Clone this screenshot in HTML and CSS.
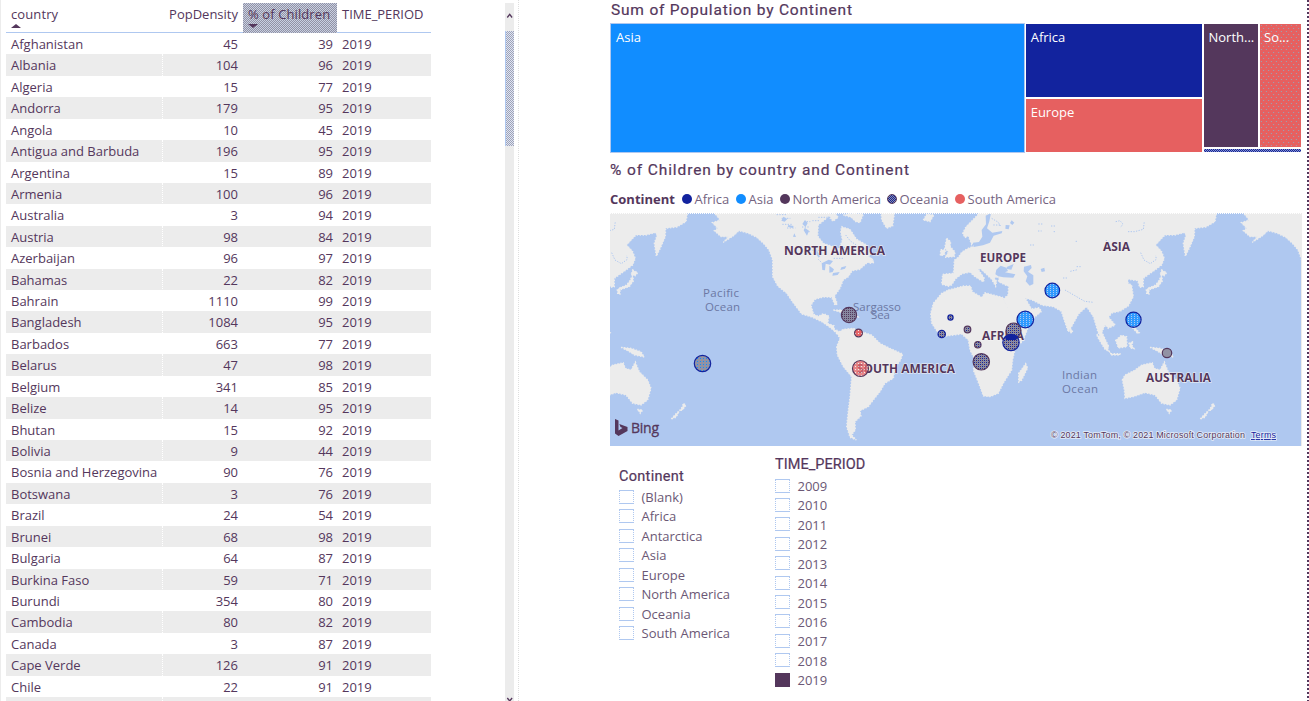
FILE: index.html
```
<!DOCTYPE html>
<html lang="en">
<head>
<meta charset="utf-8">
<title>Population report</title>
<link rel="stylesheet" href="styles.css">
</head>
<body>
<main class="report">
  <section class="table-visual">
    <div class="row head">
      <span class="country">country<i class="sort up"></i></span>
      <span class="num">PopDensity</span>
      <span class="num selected">% of Children<i class="sort down"></i></span>
      <span class="time">TIME_PERIOD</span>
    </div>
    <div class="rows" id="rows"></div>
  </section>
  <div class="scrollbar">
    <svg class="arrow" viewBox="0 0 9 22"><path d="M2.3 14.500 4.700 11.300 7.100 14.500" fill="none" stroke="#54375c" stroke-width="1.3"/></svg>
    <div class="thumb"></div>
    <svg class="arrow end" viewBox="0 0 9 5"><path d="M2.3 2 4.7 5 7.1 2" fill="none" stroke="#54375c" stroke-width="1.3"/></svg>
  </div>
  <div class="divider"></div>
  <section class="visuals">
    <h2 class="tree-title">Sum of Population by Continent</h2>
    <div class="treemap">
      <div class="tile asia">Asia</div>
      <div class="stack">
        <div class="tile africa">Africa</div>
        <div class="tile europe">Europe</div>
      </div>
      <div class="small">
        <div class="pair"><div class="tile north">North...</div><div class="tile south">So...</div></div>
        <div class="tile oceania"></div>
      </div>
    </div>
    <h2 class="map-title">% of Children by country and Continent</h2>
    <div class="legend">
      <b>Continent</b>
      <span class="l1"><i class="dot navy"></i>Africa</span>
      <span class="l2"><i class="dot blue"></i>Asia</span>
      <span class="l3"><i class="dot plum"></i>North America</span>
      <span class="l4"><i class="dot mixed"></i>Oceania</span>
      <span class="l5"><i class="dot red"></i>South America</span>
    </div>
    <svg class="map" viewBox="610 213 692 233">
      <defs>
        <pattern id="pBlue" width="3" height="2" patternUnits="userSpaceOnUse"><rect width="3" height="2" fill="#2f9aff"/><path d="M0 0h1v1H0z" fill="#afc8f0"/></pattern>
        <pattern id="pNavy" width="4" height="4" patternUnits="userSpaceOnUse"><rect width="4" height="4" fill="#8a8ca4"/><path d="M0 0h1v1H0zM2 2h1v1H2z" fill="#12239e"/><path d="M2 0h1v1H2zM0 2h1v1H0z" fill="#54375c"/></pattern>
        <pattern id="pPlum" width="2" height="2" patternUnits="userSpaceOnUse"><rect width="2" height="2" fill="#8888a0"/><path d="M0 0h1v1H0z" fill="#54375c"/></pattern>
        <pattern id="pGrey" width="3" height="3" patternUnits="userSpaceOnUse"><rect width="3" height="3" fill="#9292a4"/><path d="M1 1h1v1H1z" fill="#118dff"/></pattern>
        <pattern id="pRed" width="3" height="3" patternUnits="userSpaceOnUse"><rect width="3" height="3" fill="#e66468"/><rect width="1" height="1" fill="#ececec"/></pattern>
        <g id="americas">
          <path class="land" d="M325 5L345 30 322 38 338 55 328 62 348 80 370 80 355 97 385 78 402 62 430 70 455 82 475 100 492 120 503 150V200L518 228 545 250 562 275 590 312 622 322 650 335 672 350 688 363 687 347 668 340 672 318 655 311 640 319 626 313 618 286 630 268 655 261 680 262 690 286 697 282 689 258 705 235 715 210 730 200 742 182 765 178 785 160 805 150 790 140 800 130 785 105 755 88 735 58 710 50 707 65 712 90 705 110 692 128 685 110 655 100 638 78 640 45 665 25 680 5Z"/>
          <path class="land" d="M695 370L715 358 745 355 770 365 800 375 825 400 855 415 893 432 887 450 870 475 865 505 840 520 825 545 805 570 790 590 765 602 768 618 750 635 751 660 740 675 754 690 735 682 725 650 730 600 735 560 740 500 715 470 697 435 695 410 705 385ZM685 358L700 362 705 373 694 370Z"/>
          <path class="land" d="M828 5H869L863 48 845 55 830 30ZM665 12L690 9 700 22 684 34ZM715 15L745 9 775 13 765 38 752 35 738 22ZM685 300L710 300 725 312 710 308ZM735 314H755L760 321 738 323ZM780 140L798 145 808 158 795 160 782 152Z"/>
          <path class="water" d="M535 20l12 7-8 8-10-3zM550 45l16 3-3 6-15-4zM600 30l8 9-8 15 12 8-6 15-10-16 5-11-9-8zM568 70l5 11-9-1zM625 105l9 13 12 20-5 5-13-18zM650 160L671 149 684 153 675 164 662 161 660 181 652 180ZM673 167L687 178 683 186 673 188ZM684 189L704 186 698 195 682 197ZM709 172L724 168 720 176 706 180Z"/>
          <path class="speck" d="M530 25h26M532 43h31M546 54h25M515 14h30M597 35h19M591 51h20M602 65h16M640 22h40M622 32h24M614 121h30M700 112h25M738 111h18M686 145h31M722 75l14 18 18 12M640 148l20 20"/>
        </g>
        <g id="oldworld">
          <path class="land" d="M1125 5L1115 18 1083 50 1073 70 1080 83 1090 78 1100 104 1110 95 1106 108 1085 117 1070 127 1060 142 1048 150 1047 172 1045 190 1013 193 1010 223 1030 229 1040 225 1052 206 1072 191 1095 187 1110 200 1135 216 1138 205 1120 178 1126 176 1160 208 1172 229 1175 214 1168 204 1182 200 1180 215 1207 228H1211L1209 255 1195 267 1213 305 1236 343 1275 333 1310 304 1302 293 1280 297 1261 265 1281 270 1312 286 1345 290 1369 304 1377 329 1390 366 1400 350 1421 312 1445 290 1465 320 1480 370 1505 414 1512 411 1491 367 1500 345 1510 355 1531 345 1511 322 1520 309 1545 304 1570 288 1585 260 1580 225 1569 220V208L1598 212 1604 232 1615 230 1615 205 1650 180 1670 165 1678 145 1669 123 1652 105 1680 75 1710 75 1738 68 1743 76 1735 100 1741 139 1753 115 1768 80 1769 55 1803 51 1830 35 1835 5Z"/>
          <path class="land" d="M1030 240L1075 228 1097 228 1102 245 1130 262 1140 248 1192 262 1215 305 1235 344 1273 344 1255 390 1230 420 1223 450 1220 480 1195 520 1180 550 1155 560 1135 558 1125 530 1105 480 1110 450 1095 420 1090 390 1070 372 1025 378 1000 370 980 340 977 310 985 280 1010 250Z"/>
          <path class="land" d="M1025 85L1037 95 1036 110 1050 126 1048 140 1020 142 1030 126 1019 115ZM1007 119L1022 119 1018 135 1006 137ZM955 30L965 12 987 15 975 35ZM1262 461L1268 474 1250 511 1241 516 1241 490ZM1552 510L1560 495 1590 480 1610 465 1642 458 1648 475 1665 480 1678 456 1690 485 1715 510 1725 535 1715 570 1695 585 1670 580 1650 555 1620 548 1585 560 1560 565 1558 540ZM1635 412L1665 415 1695 425 1705 441 1675 435 1660 425ZM1532 391L1549 376 1565 380 1566 410 1540 414ZM1475 373L1495 387 1513 425 1500 418 1479 384ZM1517 431H1545V435H1517ZM1572 400L1585 394 1580 404 1587 416 1576 414ZM1580 338L1587 335 1588 350 1603 368 1598 371 1583 354ZM1684 598L1700 600 1693 610ZM1786 627L1797 614 1812 600 1800 622ZM1811 602L1819 590 1822 580 1830 586 1820 600ZM1670 180L1685 188 1678 197 1665 194ZM1670 194L1672 213 1660 230 1630 240 1627 235 1652 225 1663 210ZM1624 240H1632V252H1625ZM1396 357L1403 362 1400 370 1394 365Z"/>
          <path class="water" d="M1142 17L1158 9 1153 34 1146 55 1162 68 1192 63 1190 70 1166 77 1155 98 1134 106 1106 111 1104 98 1122 96 1132 80 1130 60 1143 43ZM1171 193L1174 179 1187 167 1204 173 1209 183 1200 187 1231 193 1225 203 1195 202 1180 199ZM1205 171l21-9-7 17-13-2zM1257 170L1278 165 1280 174 1269 185 1285 196 1285 222 1274 227 1262 214 1267 199 1256 184ZM1307 177l11-4 2 11-10 2zM1202 45l12 1-3 12-10-2zM1220 31l8 7-6 7-7-6z"/>
          <path class="speck" d="M1160 25l20 12 8 14M1165 45l20 0M1300 42h13M1299 63h11M1338 48h15M1346 65h8M1412 94h6M1275 105h12M1374 204l14 0M1396 184l22-5M1380 240l28 16 31 18 26 3M1230 429l-3 22 6 13M1532 35l13-3 9 10-8 11M1569 65l20 0 26-7 3-24M1607 128l10 22 19 11 18-13-2-12M1503 90l8 11M1415 170l15 0"/>
        </g>
      </defs>
      <rect class="sea" x="610" y="213" width="692" height="233"/>
      <g transform="matrix(.33333 0 0 .33333 605 210)">
        <use href="#americas"/><use href="#americas" x="1587"/>
        <use href="#oldworld"/><use href="#oldworld" x="-1587"/>
      </g>
      <path d="M610 213.500h692" stroke="#fff" stroke-dasharray="1 1"/>
      <path d="M1301.500 213v233" stroke="#ececec"/>
      <g class="region">
        <text x="784" y="255" textLength="101" lengthAdjust="spacingAndGlyphs">NORTH AMERICA</text>
        <text x="980" y="262" textLength="46" lengthAdjust="spacingAndGlyphs">EUROPE</text>
        <text x="1103" y="251" textLength="27" lengthAdjust="spacingAndGlyphs">ASIA</text>
        <text x="982" y="340" textLength="42" lengthAdjust="spacingAndGlyphs">AFRICA</text>
        <text x="857" y="373" textLength="98" lengthAdjust="spacingAndGlyphs">SOUTH AMERICA</text>
        <text x="1146" y="382" textLength="65" lengthAdjust="spacingAndGlyphs">AUSTRALIA</text>
      </g>
      <g class="ocean">
        <text x="703" y="297" textLength="36">Pacific</text><text x="705" y="311" textLength="35">Ocean</text>
        <text x="853" y="311" textLength="48">Sargasso</text><text x="871" y="319" textLength="19">Sea</text>
        <text x="1062" y="379" textLength="35">Indian</text><text x="1062" y="393" textLength="36">Ocean</text>
      </g>
      <g class="bubbles">
        <circle cx="702.500" cy="363.500" r="8.200" fill="url(#pGrey)"/>
        <circle class="p" cx="849" cy="315" r="7.600" fill="url(#pPlum)"/>
        <circle class="p" cx="858.500" cy="333" r="3.900" fill="url(#pRed)"/>
        <circle class="p" cx="860.500" cy="368.500" r="8" fill="url(#pRed)" fill-opacity=".75"/>
        <circle cx="950.500" cy="317.500" r="2.600" fill="url(#pNavy)"/>
        <circle cx="941.700" cy="334" r="3.700" fill="url(#pNavy)"/>
        <circle class="p" cx="967.500" cy="329.500" r="3.300" fill="url(#pNavy)"/>
        <circle class="p" cx="977.800" cy="344.700" r="3.200" fill="url(#pNavy)"/>
        <circle class="p" cx="981.300" cy="361.800" r="8.200" fill="url(#pNavy)"/>
        <circle cx="1025.300" cy="319.500" r="8.300" fill="url(#pBlue)"/>
        <circle class="p" cx="1013.500" cy="330.500" r="7.500" fill="url(#pNavy)"/>
        <circle cx="1011" cy="342.500" r="8.200" fill="url(#pNavy)"/>
        <path d="M1005 337Q1011 332 1018 336L1016 340H1006Z" fill="#12239e" stroke="none"/>
        <circle cx="1052.300" cy="290.500" r="7.300" fill="url(#pBlue)"/>
        <circle cx="1133.500" cy="319.700" r="7.600" fill="url(#pBlue)"/>
        <circle class="p" cx="1167" cy="353" r="4.700" fill="#9292a4"/>
      </g>
      <path d="M615 419L618.500 420.500V430.500L622.500 428 620.500 427 619.300 424 627.500 427V431L618.500 436 615 433.500Z" fill="#54375c"/>
      <text class="bing" x="631" y="433" textLength="28">Bing</text>
      <g class="credit"><text x="1051" y="438" textLength="194">© 2021 TomTom, © 2021 Microsoft Corporation</text><text class="terms" x="1251" y="438" textLength="25">Terms</text></g>
    </svg>
    <div class="slicers">
      <div class="slicer continent">
        <h3>Continent</h3>
        <label><i></i>(Blank)</label><label><i></i>Africa</label><label><i></i>Antarctica</label><label><i></i>Asia</label><label><i></i>Europe</label><label><i></i>North America</label><label><i></i>Oceania</label><label><i></i>South America</label>
      </div>
      <div class="slicer period">
        <h3>TIME_PERIOD</h3>
        <label><i></i>2009</label><label><i></i>2010</label><label><i></i>2011</label><label><i></i>2012</label><label><i></i>2013</label><label><i></i>2014</label><label><i></i>2015</label><label><i></i>2016</label><label><i></i>2017</label><label><i></i>2018</label><label><i class="on"></i>2019</label>
      </div>
    </div>
  </section>
  <div class="page-edge"></div>
</main>
<script src="table.js"></script>
</body>
</html>
```
FILE: styles.css
```
* { box-sizing: border-box; }
body { margin: 0; background: #fff; color: #54375c; font-family: "Open Sans", "Noto Sans", sans-serif; font-size: 13px; }
h2, h3 { margin: 0; font-weight: 400; font-family: Roboto, sans-serif; white-space: nowrap; -webkit-text-stroke: .2px #54375c; }
i { display: block; }
.report { display: flex; width: 1309px; height: 701px; overflow: hidden; border-left: 1px solid #ececec; }

.table-visual { width: 430px; padding: 3px 0 0 5px; flex: none; }
.row { display: grid; grid-template-columns: 157px 80px 94px 94px; height: 21.43px; line-height: 22px; }
.row span { padding: 0 5px; white-space: nowrap; }
.row .num { text-align: right; }
.row .num + .num { padding-right: 4px; }
.rows .row:nth-child(even) { background: #ececec; }
.rows .row:nth-child(even) .country { border-right: 1px dotted #fff; }
.head { height: 30px; border-bottom: 1px solid #afc8f0; line-height: 23px; }
.head .country { letter-spacing: .1px; }
.head .time { letter-spacing: -.02px; }
.head .num.selected { background: repeating-conic-gradient(#9292a4 0 25%, #c8d0e2 0 50%) 0 0 / 2px 2px; height: 30px; text-align: left; letter-spacing: .1px; padding-right: 0; }
.sort { width: 0; height: 0; border: 5px solid transparent; border-top: 0; border-bottom: 4px solid #54375c; margin-top: -2px; }
.sort.down { border-bottom: 0; border-top: 4px solid #54375c; }

.scrollbar { width: 9px; margin: 3px 0 0 74px; background: #ececec; flex: none; display: flex; flex-direction: column; }
.arrow { width: 9px; height: 28px; display: block; padding-bottom: 6px; }
.arrow.end { height: 5px; margin-top: auto; padding: 0; }
.thumb { height: 115px; border-left: 1px solid #afc8f0; background: repeating-conic-gradient(#9fa2b8 0 25%, #dfe6f3 0 50%) 0 0 / 2px 2px; }
.divider { width: 1px; margin-left: 4px; border-left: 1px dotted #dedede; }

.visuals { width: 692px; margin-left: 91px; flex: none; display: flex; flex-direction: column; }
h2 { font-size: 15.500px; letter-spacing: .8px; }
.tree-title { height: 23px; line-height: 20px; padding-left: 1px; }
.treemap { height: 130px; display: flex; gap: 2px; padding: 1px 1px 1px 1px; color: #fff; }
.tile { padding: 4px 5px; line-height: 19px; overflow: hidden; white-space: nowrap; }
.asia { width: 413.500px; background: #118dff; box-shadow: 0 0 0 1px #afc8f0; }
.stack { width: 176px; display: grid; grid-template-rows: 73px 53px; gap: 2px; }
.africa { background: #12239e; }
.europe, .south { background: #e66060; }
.tile.africa, .tile.europe, .tile.north { padding-left: 4.500px; }
.small { width: 97px; display: flex; flex-direction: column; gap: 2px; }
.pair { display: flex; gap: 2px; height: 123px; }
.north { width: 54px; background: #54375c; }
.south { width: 41px; padding-left: 4px; background-image: radial-gradient(circle at 25% 25%, #a39aac 0 .500px, transparent .8px), radial-gradient(circle at 75% 75%, #a39aac 0 .500px, transparent .8px); background-size: 5px 6px; }
.oceania { padding: 0; height: 3px; background: repeating-conic-gradient(#12239e 0 25%, #8b96c8 0 50%) 0 0 / 2px 2px; }
.map-title { height: 36px; line-height: 34px; letter-spacing: .9px; }
.legend { height: 24px; line-height: 20px; display: flex; }
.legend b { width: 72px; }
.legend span { display: flex; color: #74637f; white-space: nowrap; }
.l1 { width: 54px; } .l2 { width: 44px; } .l3 { width: 107px; } .l4 { width: 68px; }
.dot { width: 10px; height: 10px; border-radius: 50%; margin: 5px 2.500px 0 0; }
.navy { background: #12239e; } .blue { background: #118dff; } .plum { background: #54375c; } .red { background: #e66060; }
.mixed { background: repeating-conic-gradient(#12239e 0 25%, #9292a4 0 50%) 0 0 / 2px 2px; border: 1px solid #54375c; }

.map { display: block; width: 692px; height: 233px; flex: none; }
.sea, .water { fill: #afc8f0; }
.land { fill: #ececec; stroke: #ececec; stroke-width: 4; stroke-dasharray: 4 5; }
.speck { fill: none; stroke: #afc8f0; stroke-width: 3; stroke-dasharray: 4 4; }
.region { font-size: 12px; font-weight: 700; fill: #54375c; stroke: #f4f4f4; stroke-width: 1px; paint-order: stroke; }
.ocean { font-size: 11.500px; fill: #6c78a4; }
.bubbles circle { stroke: #12239e; stroke-width: 1.2; }
.bubbles .p { stroke: #54375c; }
.bing { font-size: 14px; fill: #54375c; stroke: #54375c; stroke-width: .3px; }
.credit { font: 9px "Liberation Sans", sans-serif; fill: #54375c; stroke: #e6edf8; stroke-width: 1.5px; paint-order: stroke; }
.terms { text-decoration: underline; fill: #12239e; }

.slicers { display: flex; padding-top: 8px; }
.slicer { width: 156px; padding-left: 9px; }
.slicer.continent { padding-top: 12px; }
.slicer h3 { font-size: 14.500px; height: 21px; line-height: 21px; letter-spacing: .3px; }
.slicer.period h3 { height: 22px; line-height: 21px; letter-spacing: .05px; }
.slicer label { display: flex; height: 19.430px; line-height: 20px; color: #6b5875; white-space: nowrap; }
.slicer i { width: 15px; height: 14px; margin: 3px 7.500px 0 0; border: 1px dotted #afc8f0; border-top-style: solid; border-bottom-style: solid; flex: none; }
.slicer .on { background: #54375c; border-color: #54375c; }
.slicer.period label { line-height: 20.500px; }
.slicer.period i { margin-top: 2.500px; }
.page-edge { width: 2px; margin-left: auto; background: repeating-linear-gradient(#54375c 0 2px, #fff 2px 4px); flex: none; }
```
FILE: table.js
```
const data = [
  ["Afghanistan", 45, 39], ["Albania", 104, 96], ["Algeria", 15, 77], ["Andorra", 179, 95],
  ["Angola", 10, 45], ["Antigua and Barbuda", 196, 95], ["Argentina", 15, 89], ["Armenia", 100, 96],
  ["Australia", 3, 94], ["Austria", 98, 84], ["Azerbaijan", 96, 97], ["Bahamas", 22, 82],
  ["Bahrain", 1110, 99], ["Bangladesh", 1084, 95], ["Barbados", 663, 77], ["Belarus", 47, 98],
  ["Belgium", 341, 85], ["Belize", 14, 95], ["Bhutan", 15, 92], ["Bolivia", 9, 44],
  ["Bosnia and Herzegovina", 90, 76], ["Botswana", 3, 76], ["Brazil", 24, 54], ["Brunei", 68, 98],
  ["Bulgaria", 64, 87], ["Burkina Faso", 59, 71], ["Burundi", 354, 80], ["Cambodia", 80, 82],
  ["Canada", 3, 87], ["Cape Verde", 126, 91], ["Chile", 22, 91]
];
document.getElementById("rows").innerHTML = data.map(([name, density, share]) =>
  `<div class="row"><span class="country">${name}</span><span class="num">${density}</span><span class="num">${share}</span><span class="time">2019</span></div>`
).join("") + '<div class="row"><span class="country"></span></div>';
```
